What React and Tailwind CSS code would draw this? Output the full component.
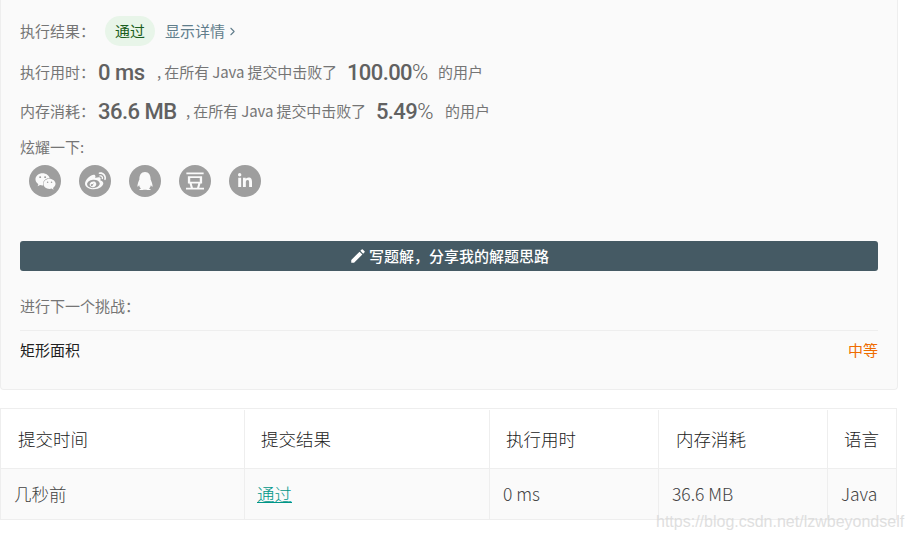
import React from 'react';
import { FaWeixin, FaWeibo, FaQq, FaLinkedinIn } from 'react-icons/fa';
import { SiDouban } from 'react-icons/si';
import { MdEdit } from 'react-icons/md';
import { ChevronRight } from 'lucide-react';

const SHARE = [
  { Icon: FaWeixin, size: 'text-[21px]' },
  { Icon: FaWeibo, size: 'text-[21px]' },
  { Icon: FaQq, size: 'text-[18px]' },
  { Icon: SiDouban, size: 'text-[18px]' },
  { Icon: FaLinkedinIn, size: 'text-[16px]' },
];

const COLUMNS = [
  { title: '提交时间', value: '几秒前', width: 'w-[244px]', head: 'pl-[17px]', cell: 'pl-[13px]' },
  { title: '提交结果', value: '通过', width: 'w-[245px]', head: 'pl-[16px]', cell: 'pl-[12px]', link: true },
  { title: '执行用时', value: '0 ms', width: 'w-[169px]', head: 'pl-[16px]', cell: 'pl-[13px]' },
  { title: '内存消耗', value: '36.6 MB', width: 'w-[169px]', head: 'pl-[17px]', cell: 'pl-[13px]' },
  { title: '语言', value: 'Java', width: 'w-[68px]', head: 'pl-[16px]', cell: 'pl-[13px]' },
];

function StatRow({ label, value, valueWidth, text, percent, percentWidth, className }) {
  return (
    <div className={`flex items-center h-[24px] text-[15px] text-[#757575] ${className}`}>
      <span className="w-[78px]">{label}：</span>
      <span className={`font-['Roboto',sans-serif] text-[22px] font-medium text-[#616161] tracking-[-0.5px] ${valueWidth}`}>{value}</span>
      <span className="tracking-[-0.1px]">, 在所有 Java 提交中击败了</span>
      <span className={`font-['Roboto',sans-serif] text-[22px] font-medium text-[#616161] ml-[10px] tracking-[-0.6px] ${percentWidth}`}>{percent}<span className="font-light">%</span></span>
      <span>{text}</span>
    </div>
  );
}

export default function App() {
  return (
    <div className="relative w-[913px] h-[540px] overflow-hidden bg-white font-['Noto_Sans_CJK_SC','Open_Sans',sans-serif]">
      <div className="w-[898px] h-[390px] bg-[#fafafa] border border-t-0 border-[#eeeeee] rounded-b-[4px] pl-[19px] pr-[19px] pt-[16px]">
        <div className="flex items-center h-[30px] text-[15px] text-[#757575]">
          <span className="w-[85px]">执行结果：</span>
          <span className="flex items-center justify-center w-[50px] h-[30px] rounded-full bg-[#e8f5e9] text-[#1b5e20]">通过</span>
          <span className="ml-[10px] text-[#607d8b]">显示详情</span>
          <ChevronRight size={13} strokeWidth={2} className="ml-[1px] text-[#607d8b]" />
        </div>
        <StatRow className="mt-[14px]" label="执行用时" value="0 ms" valueWidth="w-[59px]" percent="100.00" percentWidth="w-[91px]" text="的用户" />
        <StatRow className="mt-[15px]" label="内存消耗" value="36.6 MB" valueWidth="w-[88px]" percent="5.49" percentWidth="w-[69px]" text="的用户" />
        <div className="mt-[14px] text-[15px] leading-[20px] text-[#757575]">炫耀一下:</div>
        <div className="flex gap-[18px] ml-[9px] mt-[8px]">
          {SHARE.map(({ Icon, size }, i) => (
            <span key={i} className={`flex items-center justify-center w-[32px] h-[32px] rounded-full bg-[#9e9e9e] text-[#fafafa] ${size}`}>
              <Icon />
            </span>
          ))}
        </div>
        <button className="flex items-center justify-center w-[858px] h-[30px] mt-[44px] rounded-[3px] bg-[#455a64] text-white text-[15px] font-medium">
          <MdEdit className="text-[18px] mr-[2px]" />
          写题解，分享我的解题思路
        </button>
        <div className="mt-[25px] text-[15px] leading-[20px] text-[#757575]">进行下一个挑战：</div>
        <div className="flex items-center justify-between w-[858px] h-[40px] mt-[14px] border-t border-[#eeeeee] text-[15px]">
          <span className="text-[#212121]">矩形面积</span>
          <span className="text-[#ef6c00]">中等</span>
        </div>
      </div>

      <div className="mt-[18px] w-[897px] border border-[#eeeeee]">
        <div className="flex h-[60px] pt-[1px] bg-white border-b border-[#eeeeee] text-[17.5px] font-light text-[#212121]">
          {COLUMNS.map((col, i) => (
            <div key={col.title} className={`flex items-center shrink-0 ${col.width} ${col.head} ${i < 4 ? 'border-r border-[#eeeeee]' : ''}`}>{col.title}</div>
          ))}
        </div>
        <div className="flex h-[50px] bg-[#fafafa] text-[17.5px] font-light text-[#424242]">
          {COLUMNS.map((col, i) => (
            <div key={col.title} className={`flex items-center shrink-0 ${col.width} ${col.cell} ${i < 4 ? 'border-r border-[#eeeeee]' : ''}`}>
              {col.link ? <span className="text-[#009688] underline underline-offset-1">{col.value}</span> : col.value}
            </div>
          ))}
        </div>
      </div>

      <div className="absolute left-[656px] top-[510px] text-[16px] font-['Liberation_Sans',sans-serif] text-[#d8d8d8] opacity-80">https://blog.csdn.net/lzwbeyondself</div>
    </div>
  );
}
